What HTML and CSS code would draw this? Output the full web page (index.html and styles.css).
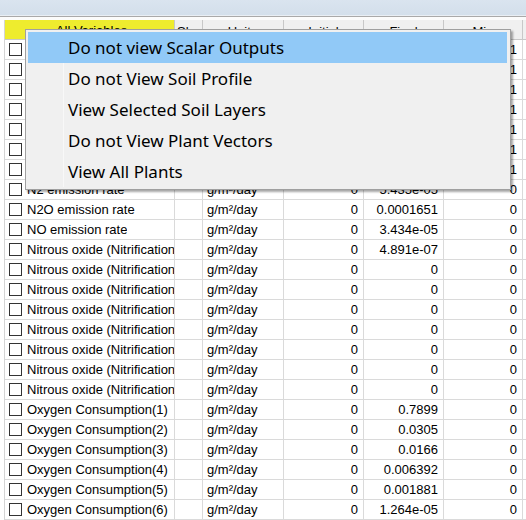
FILE: index.html
```html
<!DOCTYPE html>
<html lang="en">
<head>
    <meta charset="UTF-8">
    <title>Output Variables</title>
    <link rel="stylesheet" href="styles.css">
</head>
<body>
    <div class="titlebar"></div>
    <div class="gap"></div>

    <div class="grid">
        <div class="row head">
            <div class="cell c-name sel">All Variables</div>
            <div class="cell c-sl">Sl</div>
            <div class="cell c-unit center">Units</div>
            <div class="cell c-num center">Initial</div>
            <div class="cell c-num center">Final</div>
            <div class="cell c-min center">Min</div>
        </div>
        <div id="rows"></div>
    </div>

    <!-- context menu -->
    <div class="menu">
        <div class="menu-item active">Do not view Scalar Outputs</div>
        <div class="menu-item">Do not View Soil Profile</div>
        <div class="menu-item">View Selected Soil Layers</div>
        <div class="menu-item">Do not View Plant Vectors</div>
        <div class="menu-item">View All Plants</div>
        <div class="gutter"></div>
    </div>

    <script>
        const data = [
            ["Denitrification rate", "g/m²/day", "1", "1", "1"],
            ["Nitrification rate", "g/m²/day", "1", "1", "1"],
            ["Mineralization rate", "g/m²/day", "1", "1", "1"],
            ["Immobilization rate", "g/m²/day", "1", "1", "1"],
            ["N leaching", "g/m²/day", "1", "1", "1"],
            ["NH3 volatilization", "g/m²/day", "1", "1", "1"],
            ["N uptake", "g/m²/day", "1", "1", "1"],
            ["N2 emission rate", "g/m²/day", "0", "5.435e-05", "0"],
            ["N2O emission rate", "g/m²/day", "0", "0.0001651", "0"],
            ["NO emission rate", "g/m²/day", "0", "3.434e-05", "0"],
            ["Nitrous oxide (Nitrification", "g/m²/day", "0", "4.891e-07", "0"],
            ["Nitrous oxide (Nitrification", "g/m²/day", "0", "0", "0"],
            ["Nitrous oxide (Nitrification", "g/m²/day", "0", "0", "0"],
            ["Nitrous oxide (Nitrification", "g/m²/day", "0", "0", "0"],
            ["Nitrous oxide (Nitrification", "g/m²/day", "0", "0", "0"],
            ["Nitrous oxide (Nitrification", "g/m²/day", "0", "0", "0"],
            ["Nitrous oxide (Nitrification", "g/m²/day", "0", "0", "0"],
            ["Nitrous oxide (Nitrification", "g/m²/day", "0", "0", "0"],
            ["Oxygen Consumption(1)", "g/m²/day", "0", "0.7899", "0"],
            ["Oxygen Consumption(2)", "g/m²/day", "0", "0.0305", "0"],
            ["Oxygen Consumption(3)", "g/m²/day", "0", "0.0166", "0"],
            ["Oxygen Consumption(4)", "g/m²/day", "0", "0.006392", "0"],
            ["Oxygen Consumption(5)", "g/m²/day", "0", "0.001881", "0"],
            ["Oxygen Consumption(6)", "g/m²/day", "0", "1.264e-05", "0"]
        ];

        const rows = document.getElementById("rows");
        data.forEach(d => {
            const row = document.createElement("div");
            row.className = "row";
            row.innerHTML = `
                <div class="cell c-name"><span class="check"></span><span class="label">${d[0]}</span></div>
                <div class="cell c-sl"></div>
                <div class="cell c-unit">${d[1]}</div>
                <div class="cell c-num right">${d[2]}</div>
                <div class="cell c-num right">${d[3]}</div>
                <div class="cell c-min right">${d[4]}</div>
            `;
            rows.appendChild(row);
        });
    </script>
</body>
</html>
```

FILE: styles.css
```css
body {
    margin: 0;
    background: #fff;
    font-family: "Liberation Sans", Arial, sans-serif;
    font-size: 13px;
    color: #000;
    overflow: hidden;
    width: 526px;
    height: 520px;
    position: relative;
}

.titlebar {
    height: 15px;
    background: linear-gradient(#dae4ef, #d3dfeb);
    border-bottom: 1px solid #e9eef4;
}

.gap {
    height: 3px;
    border-top: 1px solid #a9a9a9;
    background: #fbfbfb;
}

.grid {
    margin-left: 4px;
    border-left: 1px solid #d4d4d4;
}

.row {
    display: flex;
    height: 20px;
    box-sizing: border-box;
    border-bottom: 1px solid #dadada;
}

.cell {
    box-sizing: border-box;
    border-right: 1px solid #dadada;
    line-height: 19px;
    white-space: nowrap;
    overflow: hidden;
    padding: 0 5px;
}

.c-name { width: 170px; display: flex; align-items: center; padding: 0 0 0 4px; }
.c-sl { width: 28px; }
.c-unit { width: 81px; padding-left: 4px; }
.c-num { width: 80px; }
.c-min { width: 79px; }

.right { text-align: right; }
.center { text-align: center; }

.head {
    background: #f0f0f0;
    border-bottom-color: #c8c8c8;
}

.head .cell {
    border-right-color: #c8c8c8;
    padding-top: 2px;
}

.head .sel {
    background: #eeec2e;
    justify-content: center;
}

.head .c-sl { padding-left: 2px; }

.check {
    width: 13px;
    height: 13px;
    box-sizing: border-box;
    border: 1px solid #333;
    background: #fff;
    flex-shrink: 0;
}

.label {
    margin-left: 5px;
    overflow: hidden;
}

/* Context menu */
.menu {
    position: absolute;
    left: 25px;
    top: 29px;
    width: 486px;
    box-sizing: border-box;
    padding: 2px 3px 2px 2px;
    background: #f0f0f0;
    border: 1px solid #a0a0a0;
    box-shadow: 2px 2px 2px rgba(0, 0, 0, 0.35);
    font-family: "Noto Sans", "Open Sans", sans-serif;
    font-size: 17px;
    color: #000;
}

.menu-item {
    position: relative;
    z-index: 1;
    height: 31px;
    line-height: 31px;
    padding-left: 40px;
}

.menu-item.active {
    background: #91c9f7;
}

.gutter {
    position: absolute;
    left: 37px;
    top: 33px;
    bottom: 2px;
    width: 1px;
    background: #f8f8f8;
}
```
